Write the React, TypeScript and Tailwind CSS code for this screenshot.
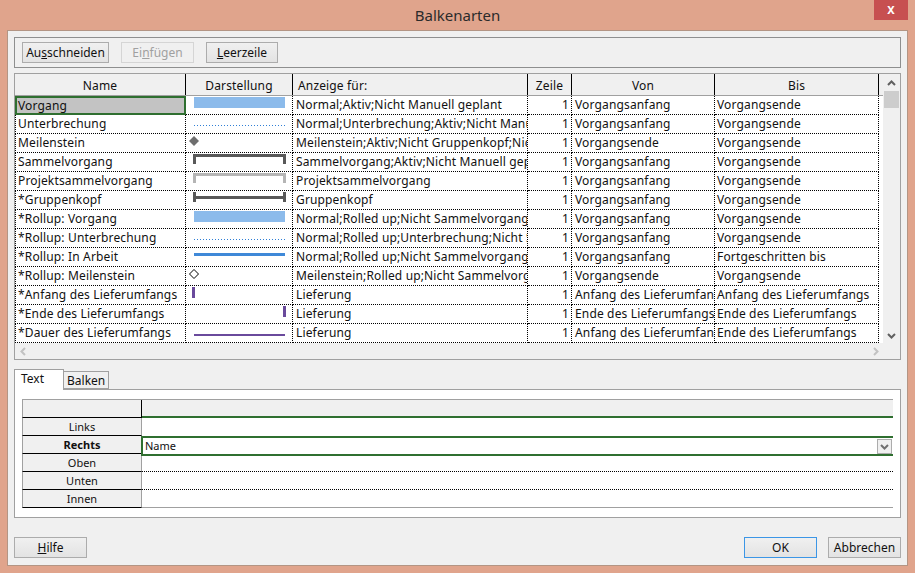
import React from "react";

type Bar =
  | "task"
  | "split"
  | "mile"
  | "summary"
  | "project"
  | "group"
  | "progress"
  | "rmile"
  | "dstart"
  | "dend"
  | "dur";

interface BarRow {
  name: string;
  bar: Bar;
  show: string;
  from: string;
  to: string;
}

const rows: BarRow[] = [
  { name: "Vorgang", bar: "task", show: "Normal;Aktiv;Nicht Manuell geplant", from: "Vorgangsanfang", to: "Vorgangsende" },
  { name: "Unterbrechung", bar: "split", show: "Normal;Unterbrechung;Aktiv;Nicht Manuell geplant", from: "Vorgangsanfang", to: "Vorgangsende" },
  { name: "Meilenstein", bar: "mile", show: "Meilenstein;Aktiv;Nicht Gruppenkopf;Nicht Manuell geplant", from: "Vorgangsende", to: "Vorgangsende" },
  { name: "Sammelvorgang", bar: "summary", show: "Sammelvorgang;Aktiv;Nicht Manuell geplant", from: "Vorgangsanfang", to: "Vorgangsende" },
  { name: "Projektsammelvorgang", bar: "project", show: "Projektsammelvorgang", from: "Vorgangsanfang", to: "Vorgangsende" },
  { name: "*Gruppenkopf", bar: "group", show: "Gruppenkopf", from: "Vorgangsanfang", to: "Vorgangsende" },
  { name: "*Rollup: Vorgang", bar: "task", show: "Normal;Rolled up;Nicht Sammelvorgang", from: "Vorgangsanfang", to: "Vorgangsende" },
  { name: "*Rollup: Unterbrechung", bar: "split", show: "Normal;Rolled up;Unterbrechung;Nicht Sammelvorgang", from: "Vorgangsanfang", to: "Vorgangsende" },
  { name: "*Rollup: In Arbeit", bar: "progress", show: "Normal;Rolled up;Nicht Sammelvorgang", from: "Vorgangsanfang", to: "Fortgeschritten bis" },
  { name: "*Rollup: Meilenstein", bar: "rmile", show: "Meilenstein;Rolled up;Nicht Sammelvorgang", from: "Vorgangsende", to: "Vorgangsende" },
  { name: "*Anfang des Lieferumfangs", bar: "dstart", show: "Lieferung", from: "Anfang des Lieferumfangs", to: "Anfang des Lieferumfangs" },
  { name: "*Ende des Lieferumfangs", bar: "dend", show: "Lieferung", from: "Ende des Lieferumfangs", to: "Ende des Lieferumfangs" },
  { name: "*Dauer des Lieferumfangs", bar: "dur", show: "Lieferung", from: "Anfang des Lieferumfangs", to: "Ende des Lieferumfangs" },
];

// dots for the "Unterbrechung" line
const dots = Array.from({ length: 31 }, (_, i) => 8 + i * 3);

const BarGlyph: React.FC<{ bar: Bar }> = ({ bar }) => {
  const bracket = (color: string) => (
    <>
      <rect x="7" y="1" width="93" height="3" fill={color} />
      <rect x="7" y="1" width="3" height="10" fill={color} />
      <rect x="97" y="1" width="3" height="10" fill={color} />
    </>
  );
  return (
    <svg width="106" height="18" viewBox="0 0 106 18" shapeRendering="crispEdges">
      {bar === "task" && <rect x="8" y="1" width="91" height="11" fill="#8cbbeb" />}
      {bar === "split" && dots.map((x) => <rect key={x} x={x} y="10" width="1" height="1" fill="#2f7fd6" />)}
      {bar === "mile" && <polygon points="8,2 13,7 8,12 3,7" fill="#6e6e6e" shapeRendering="auto" />}
      {bar === "summary" && bracket("#595959")}
      {bar === "project" && bracket("#b5b5b5")}
      {bar === "group" && (
        <>
          <rect x="7" y="5" width="93" height="3" fill="#595959" />
          <rect x="7" y="1" width="3" height="10" fill="#595959" />
          <rect x="97" y="1" width="3" height="10" fill="#595959" />
        </>
      )}
      {bar === "progress" && <rect x="8" y="5" width="91" height="3" fill="#3f89d8" />}
      {bar === "rmile" && (
        <polygon points="8,2.5 12.5,7 8,11.5 3.5,7" fill="#fff" stroke="#000" strokeWidth="1" shapeRendering="auto" />
      )}
      {bar === "dstart" && <rect x="6" y="1" width="3" height="11" fill="#6a4a9c" />}
      {bar === "dend" && <rect x="97" y="1" width="3" height="11" fill="#6a4a9c" />}
      {bar === "dur" && <rect x="8" y="10" width="91" height="2" fill="#6a4a9c" />}
    </svg>
  );
};

const Chevron: React.FC<{ dir: "up" | "down" | "left" | "right"; color: string }> = ({ dir, color }) => {
  const pts = {
    up: "1,6 4.5,2.5 8,6",
    down: "1,3 4.5,6.5 8,3",
    left: "6,1 2.5,4.5 6,8",
    right: "3,1 6.5,4.5 3,8",
  }[dir];
  return (
    <svg width="9" height="9" viewBox="0 0 9 9">
      <polyline points={pts} fill="none" stroke={color} strokeWidth="2" />
    </svg>
  );
};

const WinButton: React.FC<{ children: React.ReactNode; w: string; disabled?: boolean; focus?: boolean }> = ({
  children,
  w,
  disabled,
  focus,
}) => (
  <div
    className={[
      "h-[21px] flex items-center justify-center text-[12px] border",
      w,
      disabled
        ? "border-[#d5d5d5] bg-[#f0f0f0] text-[#a0a0a0]"
        : focus
          ? "border-[#3c96e6] bg-gradient-to-b from-[#f0f0f0] to-[#e3e3e3] text-[#111]"
          : "border-[#acacac] bg-gradient-to-b from-[#f0f0f0] to-[#e3e3e3] text-[#111]",
    ].join(" ")}
  >
    {children}
  </div>
);

const cell =
  "h-[19px] border-b border-r border-dotted border-black overflow-hidden whitespace-nowrap leading-[18px] text-[12px] tracking-[0.15px]";

const sides = [
  { label: "", kind: "head" },
  { label: "Links", kind: "links" },
  { label: "Rechts", kind: "rechts" },
  { label: "Oben", kind: "dot" },
  { label: "Unten", kind: "dot" },
  { label: "Innen", kind: "last" },
];

export default function App() {
  return (
    <div className="w-[915px] h-[573px] bg-[#e0a48c] flex flex-col font-['Noto_Sans',sans-serif] text-[#111] overflow-hidden">
      {/* title bar */}
      <div className="h-[30px] relative flex items-center justify-center">
        <span className="text-[15px] text-[#2b2b2b] mt-[1px]">Balkenarten</span>
        <div className="absolute right-[7px] top-0 w-[34px] h-[20px] bg-[#c75050] flex items-center justify-center text-white text-[11px] font-bold">
          X
        </div>
      </div>

      <div className="mx-[7px] mb-[7px] flex-1 bg-[#f0f0f0] border border-[#b39584] px-[6px] pt-[6px] flex flex-col">
        {/* toolbar */}
        <div className="h-[31px] border border-[#8e8f8f] flex items-center pl-[7px] gap-[12px]">
          <WinButton w="w-[87px]">
            <span>
              Au<u>s</u>schneiden
            </span>
          </WinButton>
          <WinButton w="w-[73px]" disabled>
            <span>
              Ei<u>n</u>fügen
            </span>
          </WinButton>
          <WinButton w="w-[72px]">
            <span>
              <u>L</u>eerzeile
            </span>
          </WinButton>
        </div>

        {/* table */}
        <div className="mt-[5px] h-[287px] border border-[#a0a0a0] flex flex-col bg-white">
          <div className="flex flex-1 min-h-0">
            <div className="w-[868px] flex flex-col">
              <div className="h-[22px] flex bg-[#f0f0f0] border-b border-[#a0a0a0] text-[12px] leading-[24px] tracking-[0.15px]">
                <div className="w-[171px] text-center border-r border-black">Name</div>
                <div className="w-[107px] text-center border-r border-black">Darstellung</div>
                <div className="w-[235px] pl-[5px] border-r border-black">Anzeige für:</div>
                <div className="w-[44px] text-center border-r border-black">Zeile</div>
                <div className="w-[143px] text-center border-r border-black">Von</div>
                <div className="w-[164px] text-center border-r border-black">Bis</div>
              </div>
              {rows.map((r, i) => (
                <div key={r.name} className="flex">
                  {i === 0 ? (
                    <div className="w-[171px] h-[19px] bg-[#c3c3c3] border-2 border-[#2f6f30] leading-[16px] text-[12px] tracking-[0.15px] pl-[1px]">
                      {r.name}
                    </div>
                  ) : (
                    <div className={`${cell} w-[171px] border-l pl-[2px]`}>{r.name}</div>
                  )}
                  <div className={`${cell} w-[107px]`}>
                    <BarGlyph bar={r.bar} />
                  </div>
                  <div className={`${cell} w-[235px] pl-[3px]`}>{r.show}</div>
                  <div className={`${cell} w-[44px] text-right pr-[2px]`}>1</div>
                  <div className={`${cell} w-[143px] pl-[3px]`}>{r.from}</div>
                  <div className={`${cell} w-[164px] pl-[2px]`}>{r.to}</div>
                </div>
              ))}
            </div>
            <div className="w-[17px] bg-[#f0f0f0] flex flex-col items-center">
              <div className="h-[16px] flex items-center justify-center mt-[1px]">
                <Chevron dir="up" color="#606060" />
              </div>
              <div className="w-[15px] h-[17px] bg-[#cdcdcd]" />
              <div className="flex-1" />
              <div className="h-[16px] flex items-center justify-center">
                <Chevron dir="down" color="#606060" />
              </div>
            </div>
          </div>
          <div className="h-[16px] bg-[#f0f0f0] flex items-center justify-between pl-[4px] pr-[20px]">
            <Chevron dir="left" color="#c2c2c2" />
            <Chevron dir="right" color="#c2c2c2" />
          </div>
        </div>

        {/* tabs */}
        <div className="mt-[9px] flex items-end h-[21px] relative z-10">
          <div className="w-[50px] h-[21px] bg-white border border-b-0 border-[#a0a0a0] text-[12px] pl-[6px] leading-[18px]">
            Text
          </div>
          <div className="w-[45px] h-[18px] bg-[#f0f0f0] border border-l-0 border-[#a0a0a0] text-[12px] pl-[3px] leading-[17px] mb-[1px]">
            Balken
          </div>
        </div>
        <div className="-mt-[1px] h-[129px] bg-white border border-[#a0a0a0] px-[7px] pt-[9px]">
          <div className="border-t border-[#a0a0a0]">
            {sides.map((s) => (
              <div key={s.kind + s.label} className="flex h-[18px]">
                <div
                  className={[
                    "w-[120px] bg-[#f0f0f0] border-l border-l-[#a0a0a0] border-b border-b-black border-r text-[11px] text-center leading-[18px]",
                    s.kind === "head" ? "border-r-black" : "border-r-[#a0a0a0]",
                    s.kind === "rechts" ? "font-bold" : "",
                  ].join(" ")}
                >
                  {s.label}
                </div>
                {s.kind === "head" && <div className="flex-1 bg-[#f0f0f0] border-b-2 border-[#2f6f30]" />}
                {s.kind === "links" && <div className="flex-1 bg-white" />}
                {s.kind === "rechts" && (
                  <div className="flex-1 -ml-[1px] h-[20px] border-2 border-r-0 border-[#2f6f30] flex items-center text-[11px] pl-[2px] relative z-10 bg-white">
                    <span>Name</span>
                    <div className="ml-auto mr-[1px] w-[15px] h-[15px] border border-[#acacac] bg-[#f0f0f0] flex items-center justify-center">
                      <Chevron dir="down" color="#707070" />
                    </div>
                  </div>
                )}
                {s.kind === "dot" && <div className="flex-1 border-b border-dotted border-black" />}
                {s.kind === "last" && <div className="flex-1 border-b border-[#a0a0a0]" />}
              </div>
            ))}
          </div>
        </div>

        {/* bottom buttons */}
        <div className="mt-[19px] flex items-center">
          <WinButton w="w-[73px]">
            <span>
              <u>H</u>ilfe
            </span>
          </WinButton>
          <div className="flex-1" />
          <WinButton w="w-[73px]" focus>
            OK
          </WinButton>
          <div className="w-[11px]" />
          <WinButton w="w-[73px]">Abbrechen</WinButton>
        </div>
      </div>
    </div>
  );
}
